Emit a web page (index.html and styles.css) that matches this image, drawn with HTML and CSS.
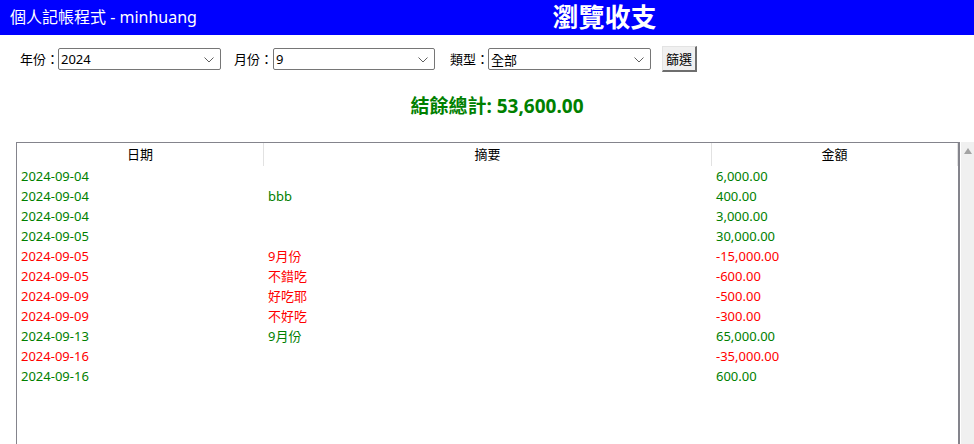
FILE: index.html
```html
<!DOCTYPE html>
<html lang="zh-Hant">
<head>
<meta charset="utf-8">
<title>瀏覽收支</title>
<link rel="stylesheet" href="styles.css">
</head>
<body>
<header class="topbar">
  <div class="app-name">個人記帳程式 - minhuang</div>
  <h1 class="page-title">瀏覽收支</h1>
</header>

<form class="filters">
  <label class="flabel">年份：</label>
  <div class="fselect"><span>2024</span><svg class="chev" width="10" height="6" viewBox="0 0 10 6"><path d="M0.5 0.5 L5 5 L9.5 0.5" fill="none" stroke="#606060" stroke-width="1"/></svg></div>
  <label class="flabel wide">月份：</label>
  <div class="fselect mid"><span>9</span><svg class="chev" width="10" height="6" viewBox="0 0 10 6"><path d="M0.5 0.5 L5 5 L9.5 0.5" fill="none" stroke="#606060" stroke-width="1"/></svg></div>
  <label class="flabel">類型：</label>
  <div class="fselect last"><span>全部</span><svg class="chev" width="10" height="6" viewBox="0 0 10 6"><path d="M0.5 0.5 L5 5 L9.5 0.5" fill="none" stroke="#606060" stroke-width="1"/></svg></div>
  <button type="button" class="fbtn">篩選</button>
</form>

<div class="total">結餘總計: 53,600.00</div>

<div class="list-wrap">
  <div class="list">
    <div class="thead">
      <div class="th">日期</div>
      <div class="th">摘要</div>
      <div class="th">金額</div>
    </div>
    <div class="row in"><div>2024-09-04</div><div></div><div>6,000.00</div></div>
    <div class="row in"><div>2024-09-04</div><div>bbb</div><div>400.00</div></div>
    <div class="row in"><div>2024-09-04</div><div></div><div>3,000.00</div></div>
    <div class="row in"><div>2024-09-05</div><div></div><div>30,000.00</div></div>
    <div class="row out"><div>2024-09-05</div><div>9月份</div><div>-15,000.00</div></div>
    <div class="row out"><div>2024-09-05</div><div>不錯吃</div><div>-600.00</div></div>
    <div class="row out"><div>2024-09-09</div><div>好吃耶</div><div>-500.00</div></div>
    <div class="row out"><div>2024-09-09</div><div>不好吃</div><div>-300.00</div></div>
    <div class="row in"><div>2024-09-13</div><div>9月份</div><div>65,000.00</div></div>
    <div class="row out"><div>2024-09-16</div><div></div><div>-35,000.00</div></div>
    <div class="row in"><div>2024-09-16</div><div></div><div>600.00</div></div>
  </div>
  <div class="vscroll">
    <svg class="arrow" width="8" height="6" viewBox="0 0 8 6"><path d="M4 0 L8 6 L0 6 Z" fill="#a3a3a3"/></svg>
  </div>
</div>
</body>
</html>
```

FILE: styles.css
```css
* { box-sizing: border-box; }
html, body { margin: 0; padding: 0; background: #fff; }
body {
  font-family: "Noto Sans", "Noto Sans CJK TC", sans-serif;
  font-size: 13px;
  color: #000;
  overflow: hidden;
}

.topbar {
  display: flex;
  align-items: center;
  height: 35px;
  background: #0000ff;
  color: #fff;
}
.app-name {
  width: 235px;
  padding-left: 10px;
  font-size: 16px;
  line-height: 35px;
  white-space: nowrap;
}
.page-title {
  flex: 1;
  margin: 0;
  text-align: center;
  font-size: 26px;
  font-weight: bold;
  line-height: 35px;
}

.filters {
  display: flex;
  align-items: center;
  height: 26px;
  margin: 11px 0 0 20px;
}
.flabel {
  width: 38px;
  white-space: nowrap;
  line-height: 22px;
  font-family: "Noto Sans CJK TC", sans-serif;
}
.flabel.wide { width: 39px; }
.fselect {
  position: relative;
  display: flex;
  align-items: center;
  width: 163px;
  height: 22px;
  margin-right: 13px;
  padding-left: 2px;
  border: 1px solid #767676;
  border-radius: 2px;
  background: #fff;
}
.fselect.mid { width: 162px; margin-right: 15px; }
.fselect.last { margin-right: 11px; }
.chev { position: absolute; right: 6px; top: 8px; }
.fbtn {
  width: 35px;
  height: 26px;
  padding: 0;
  font: inherit;
  font-size: 13px;
  color: #000;
  background: #f0f0f0;
  border-style: solid;
  border-width: 1px 2px 2px 1px;
  border-color: #e3e3e3 #6e6e6e #6e6e6e #e3e3e3;
}

.total {
  margin: 22px 0 0 20px;
  text-align: center;
  color: #008000;
  font-size: 19px;
  font-weight: bold;
  line-height: 24px;
}

.list-wrap {
  display: flex;
  margin: 24px 0 0 16px;
  height: 320px;
}
.list {
  flex: 1;
  border: 1px solid #84848c;
  border-right-width: 2px;
}
.vscroll {
  width: 13px;
  margin-left: 1px;
  background: #f0f0f0;
  display: flex;
  justify-content: center;
  padding-top: 6px;
}
.arrow { display: block; }

.thead, .row {
  display: grid;
  grid-template-columns: 247px 448px 1fr;
}
.th {
  height: 23px;
  line-height: 23px;
  text-align: center;
  border-right: 1px solid #e2e2e2;
}
.row div {
  height: 20px;
  line-height: 20px;
  padding-left: 4px;
  white-space: nowrap;
}
.row.in { color: #008000; }
.row.out { color: #ff0000; }
```
